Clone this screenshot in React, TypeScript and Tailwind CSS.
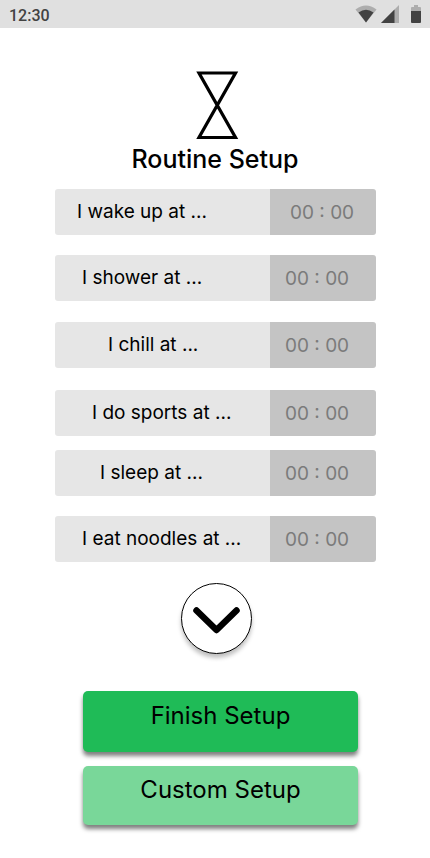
type Step = {
  id: string;
  label: string;
  gap: string;
  indent: string;
  timeIndent: string;
};

const steps: Step[] = [
  { id: "wake", label: "I wake up at ...", gap: "", indent: "pl-[22px]", timeIndent: "pl-5" },
  { id: "shower", label: "I shower at ...", gap: "mt-5", indent: "pl-[27px]", timeIndent: "pl-[15px]" },
  { id: "chill", label: "I chill at ...", gap: "mt-[21px]", indent: "pl-[53px]", timeIndent: "pl-[15px]" },
  { id: "sports", label: "I do sports at ...", gap: "mt-[22px]", indent: "pl-[37px]", timeIndent: "pl-[15px]" },
  { id: "sleep", label: "I sleep at ...", gap: "mt-[14px]", indent: "pl-[45px]", timeIndent: "pl-[15px]" },
  { id: "noodles", label: "I eat noodles at ...", gap: "mt-5", indent: "pl-[27px]", timeIndent: "pl-[15px]" },
];

function StatusBar() {
  return (
    <header className="flex h-7 items-center bg-[#e0e0e0] pl-[9px] text-[#424242]">
      <span className="pt-1 font-[Roboto,sans-serif] text-base font-medium">12:30</span>
      <svg className="ml-auto" width="76" height="28" viewBox="0 0 76 28" aria-hidden="true">
        <path d="M1.500 9.500Q12 1.500 22.500 9.500L12 22.500Z" fill="#adadad" />
        <path d="M4.500 12.500Q12 7 19.500 12.500L12 22.500Z" fill="#424242" />
        <path d="M45 5V23H27Z" fill="#adadad" />
        <path d="M40.500 9.500V23H27Z" fill="#424242" />
        <path d="M60 5h4v2h2a1 1 0 0 1 1 1v4H57V8a1 1 0 0 1 1-1h2z" fill="#adadad" />
        <path d="M57 11h10v11a1 1 0 0 1-1 1h-8a1 1 0 0 1-1-1z" fill="#424242" />
      </svg>
    </header>
  );
}

function StepRow({ step }: { step: Step }) {
  return (
    <div className={`flex h-[46px] overflow-hidden rounded-[3px] ${step.gap}`}>
      <label
        htmlFor={step.id}
        className={`flex flex-1 items-center whitespace-nowrap bg-[#e6e6e6] pb-px text-[19px] leading-6 text-black ${step.indent}`}
      >
        {step.label}
      </label>
      <input
        id={step.id}
        type="text"
        placeholder="00 : 00"
        className={`w-[106px] bg-[#c4c4c4] pt-0.5 text-[19px] text-[#7b7b7b] outline-none placeholder:text-[#7b7b7b] ${step.timeIndent}`}
      />
    </div>
  );
}

export default function App() {
  return (
    <div className="min-h-screen bg-white pb-8 font-[Inter,sans-serif] text-black">
      <StatusBar />
      <main>
        <svg className="mx-auto mt-[43px] block translate-x-0.5" width="44" height="69" viewBox="0 0 44 69" aria-hidden="true">
          <path d="M4 2H40.500L4 66.500H40.500Z" fill="none" stroke="#000" strokeWidth="3.200" />
        </svg>
        <h1 className="mt-1 text-center text-[25px] leading-[30px] font-medium">Routine Setup</h1>
        <form className="mt-[15px]">
          <div className="pl-[55px] pr-[54px]">
            {steps.map((step) => (
              <StepRow key={step.id} step={step} />
            ))}
          </div>
          <button
            type="button"
            aria-label="Show more"
            className="mx-auto mt-[21px] flex size-[71px] translate-x-px items-center justify-center rounded-full border border-black bg-white shadow-[0_4px_4px_rgba(0,0,0,0.25)]"
          >
            <svg width="50" height="32" viewBox="0 0 50 32" aria-hidden="true">
              <path d="M5.500 7.500L25.500 27L45.500 7.500" fill="none" stroke="#000" strokeWidth="6.500" strokeLinecap="round" strokeLinejoin="round" />
            </svg>
          </button>
          <div className="mt-[37px] flex flex-col gap-[14px] pl-[83px] pr-[72px]">
            <button type="submit" className="h-[61px] rounded-[5px] bg-[#1fbb57] pb-3 text-2xl shadow-[0_4px_4px_rgba(0,0,0,0.5)]">
              Finish Setup
            </button>
            <button type="button" className="h-[59px] rounded-[5px] bg-[#79d799] pb-3 text-2xl shadow-[0_4px_4px_rgba(0,0,0,0.5)]">
              Custom Setup
            </button>
          </div>
        </form>
      </main>
    </div>
  );
}
